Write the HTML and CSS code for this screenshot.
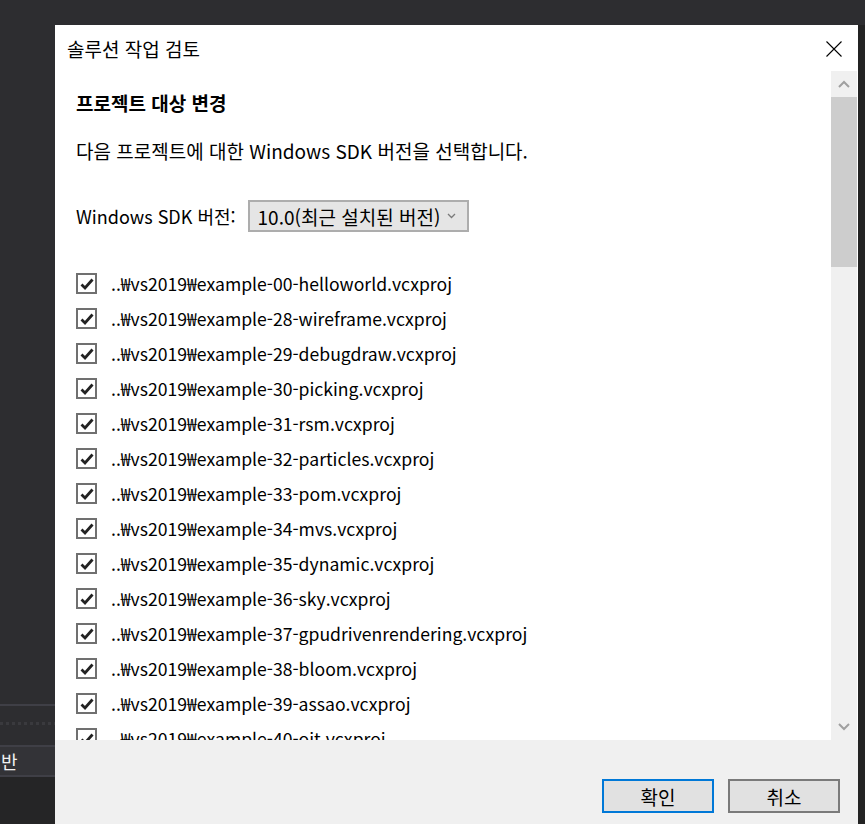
FILE: index.html
```html
<!DOCTYPE html>
<html lang="ko">
<head>
    <meta charset="UTF-8">
    <title>솔루션 작업 검토</title>
    <link rel="stylesheet" href="styles.css">
</head>
<body>
    <div class="stage">
        <!--ide behind the dialog-->
        <div class="ide-left">
            <div class="ide-top"></div>
            <div class="ide-line"></div>
            <div class="ide-dots"></div>
            <div class="ide-line"></div>
            <div class="ide-tab">반</div>
            <div class="ide-line"></div>
            <div class="ide-bottom"></div>
        </div>

        <div class="dialog">
            <div class="titlebar">
                <span class="title">솔루션 작업 검토</span>
                <svg class="close" width="16" height="16" viewBox="0 0 16 16">
                    <path d="M0.5 0.5 L15.5 15.5 M15.5 0.5 L0.5 15.5" stroke="#000" stroke-width="1.1" fill="none"/>
                </svg>
            </div>

            <div class="dialog-body">
                <div class="content">
                    <h2 class="heading">프로젝트 대상 변경</h2>
                    <p class="intro">다음 프로젝트에 대한 Windows SDK 버전을 선택합니다.</p>

                    <div class="sdk-row">
                        <label>Windows SDK 버전:</label>
                        <div class="combo">
                            <span>10.0(최근 설치된 버전)</span>
                            <svg width="9" height="6" viewBox="0 0 9 6">
                                <path d="M1 1 L4.5 4.5 L8 1" stroke="#7a7a7a" stroke-width="1.3" fill="none"/>
                            </svg>
                        </div>
                    </div>

                    <ul class="projects" id="projects"></ul>
                </div>

                <div class="scrollbar">
                    <div class="arrow">
                        <svg width="12" height="8" viewBox="0 0 12 8">
                            <path d="M1 7 L6 2 L11 7" stroke="#a0a0a0" stroke-width="2" fill="none"/>
                        </svg>
                    </div>
                    <div class="thumb"></div>
                    <div class="track"></div>
                    <div class="arrow">
                        <svg width="12" height="8" viewBox="0 0 12 8">
                            <path d="M1 1 L6 6 L11 1" stroke="#a0a0a0" stroke-width="2" fill="none"/>
                        </svg>
                    </div>
                </div>
            </div>

            <div class="footer">
                <button class="btn primary">확인</button>
                <button class="btn">취소</button>
            </div>
        </div>

        <div class="ide-right"></div>
    </div>

    <script>
        const names = [
            'example-00-helloworld',
            'example-28-wireframe',
            'example-29-debugdraw',
            'example-30-picking',
            'example-31-rsm',
            'example-32-particles',
            'example-33-pom',
            'example-34-mvs',
            'example-35-dynamic',
            'example-36-sky',
            'example-37-gpudrivenrendering',
            'example-38-bloom',
            'example-39-assao',
            'example-40-oit'
        ];

        const list = document.getElementById('projects');
        for (let name of names) {
            const li = document.createElement('li');
            li.innerHTML = `
                <span class="check">
                    <svg width="16" height="16" viewBox="0 0 16 16">
                        <path d="M2.5 8.5 L6 12 L13.5 3.5" stroke="#222" stroke-width="2.8" fill="none"/>
                    </svg>
                </span>
                <span class="path">..₩vs2019₩${name}.vcxproj</span>
            `;
            list.appendChild(li);
        }
    </script>
</body>
</html>
```

FILE: styles.css
```css
body {
    margin: 0;
    width: 865px;
    height: 824px;
    overflow: hidden;
    background-color: #2d2d30;
    font-family: "Noto Sans CJK KR", sans-serif;
    font-size: 19px;
    color: #000;
}
.stage {
    display: flex;
    padding-top: 25px;
    height: 799px;
}
.ide-left {
    width: 55px;
    display: flex;
    flex-direction: column;
    margin-top: -25px;
}
.ide-top {
    height: 704px;
    background-color: #2d2d30;
}
.ide-line {
    height: 2px;
    background-color: #3f3f46;
}
.ide-dots {
    height: 39px;
    background-color: #2d2d30;
    background-image: repeating-linear-gradient(90deg, #3a3a3e 0 3px, transparent 3px 6px);
    background-size: 100% 3px;
    background-position: 0 16px;
    background-repeat: no-repeat;
}
.ide-tab {
    height: 28px;
    background-color: #333337;
    color: #f1f1f1;
    font-size: 18px;
    line-height: 28px;
    padding-left: 1px;
    overflow: hidden;
}
.ide-bottom {
    flex: 1;
    background-color: #252526;
}
.ide-right {
    flex: 1;
    background-color: #232323;
}
.dialog {
    width: 803px;
    background-color: #fff;
    display: flex;
    flex-direction: column;
}
.titlebar {
    height: 46px;
    display: flex;
    align-items: center;
    justify-content: space-between;
    padding: 0 16px 0 12px;
}
.close {
    margin-top: 1px;
}
.dialog-body {
    height: 669px;
    display: flex;
}
.content {
    flex: 1;
    padding-left: 21px;
    overflow: hidden;
}
.heading {
    margin: 19px 0 0;
    font-size: 19px;
    font-weight: bold;
    line-height: 26px;
}
.intro {
    margin: 22px 0 0;
    line-height: 26px;
}
.sdk-row {
    display: flex;
    align-items: center;
    gap: 12px;
    margin-top: 36px;
}
.sdk-row label {
    font-size: 18px;
}
.combo {
    width: 198px;
    height: 28px;
    border: 2px solid #adadad;
    background-color: #e5e5e5;
    display: flex;
    align-items: center;
    justify-content: space-between;
    padding: 0 11px 0 8px;
}
.projects {
    list-style: none;
    margin: 34px 0 0;
    padding: 0;
}
.projects li {
    height: 35px;
    display: flex;
    align-items: center;
    gap: 14px;
}
.path {
    font-size: 17.6px;
}
.check {
    width: 17px;
    height: 17px;
    border: 2px solid #707070;
    display: flex;
    align-items: center;
    justify-content: center;
}
.scrollbar {
    width: 26px;
    margin-right: 1px;
    background-color: #f0f0f0;
    display: flex;
    flex-direction: column;
}
.arrow {
    height: 26px;
    display: flex;
    align-items: center;
    justify-content: center;
}
.thumb {
    height: 170px;
    background-color: #cdcdcd;
}
.track {
    flex: 1;
}
.footer {
    flex: 1;
    background-color: #f0f0f0;
    display: flex;
    justify-content: flex-end;
    align-items: flex-start;
    gap: 14px;
    padding: 39px 18px 0 0;
}
.btn {
    width: 112px;
    height: 34px;
    border: 2px solid #7a7a7a;
    background-color: #e1e1e1;
    font-family: "Noto Sans CJK KR", sans-serif;
    font-size: 19px;
    color: #000;
    padding: 0;
}
.btn.primary {
    border-color: #0078d7;
}
```
